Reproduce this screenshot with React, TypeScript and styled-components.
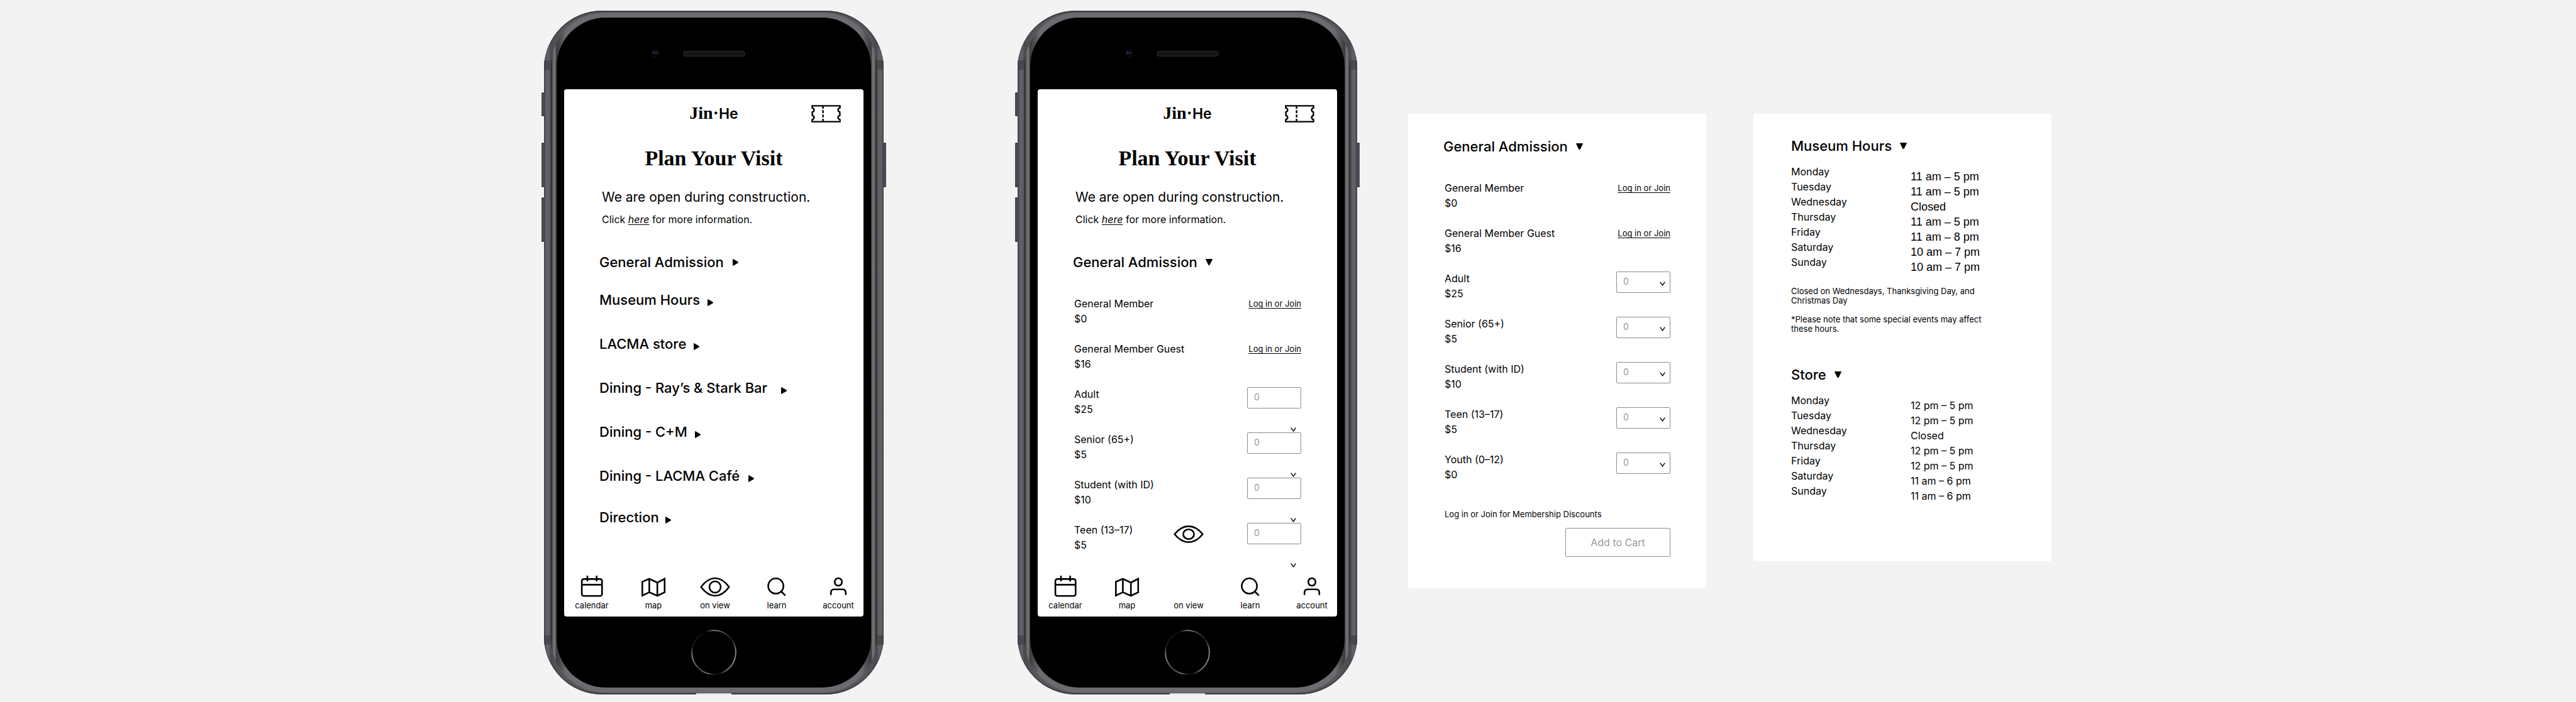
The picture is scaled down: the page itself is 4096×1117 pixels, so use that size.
import React from 'react';
import styled, { createGlobalStyle } from 'styled-components';

const sans = `Inter, "Liberation Sans", Arial, sans-serif`;
const grotesk = `"Liberation Sans", Arial, sans-serif`;
const serif = `"Liberation Serif", "Times New Roman", serif`;

const GlobalStyle = createGlobalStyle`
  *, *::before, *::after { box-sizing: border-box; }
  body {
    margin: 0;
    background: #f3f3f3;
    color: #000;
    font-family: ${sans};
    font-size: 16px;
    line-height: 24px;
  }
  h1, h2, p, ul { margin: 0; padding: 0; }
  ul { list-style: none; }
  a { color: inherit; }
  button, select { font: inherit; color: inherit; }
  button { border: 0; background: none; padding: 0; cursor: pointer; }
  svg { display: block; flex: none; }
`;

/* ---------- page ---------- */

const Stage = styled.main`
  display: flex;
  justify-content: center;
  align-items: flex-start;
  gap: 81px;
  min-height: 100vh;
  padding: 17px 0 0 31px;
`;

const Phones = styled.div`
  display: flex;
  gap: 213px;
`;

const Cards = styled.div`
  display: flex;
  align-items: flex-start;
  gap: 75px;
  padding-top: 164px;
`;

/* ---------- device ---------- */

const Body = styled.div`
  position: relative;
  width: 540px;
  padding: 3px 11px;
  border-radius: 92px;
  background: linear-gradient(to right, #3c3c40 0, #5e5e66 3px, #62626a 7px, #4a4a50 11px,
    #58585c 30px, #58585c calc(100% - 30px), #4a4a50 calc(100% - 11px), #62626a calc(100% - 7px),
    #5e5e66 calc(100% - 3px), #3c3c40 100%);
  box-shadow: inset 0 2px 1px #3c3c40, inset 0 -2px 1px #3c3c40;
`;

const Rim = styled.div`
  padding: 8px 9px;
  border-radius: 86px;
  background: linear-gradient(to right, #1a1a1a 0, #606062 3px, #7a7a7a 6px, #3a3a3a 9px,
    #6c6c70 24px, #6c6c70 calc(100% - 24px), #3a3a3a calc(100% - 9px), #7a7a7a calc(100% - 6px),
    #606062 calc(100% - 3px), #1a1a1a 100%);
`;

const Face = styled.div`
  padding: 0 12px;
  border-radius: 78px;
  background: #000;
`;

const SideKey = styled.span<{ $side: 'left' | 'right'; $top: number; $length: number }>`
  position: absolute;
  ${(p) => p.$side}: -4px;
  top: ${(p) => p.$top}px;
  width: 4px;
  height: ${(p) => p.$length}px;
  border-radius: 2px;
  background: #4b4b52;
  border-top: 2px solid #26262a;
  border-bottom: 2px solid #26262a;
`;

const Antenna = styled.span<{ $side: 'left' | 'right'; $edge: 'top' | 'bottom' }>`
  position: absolute;
  ${(p) => p.$side}: 0;
  ${(p) => p.$edge}: 79px;
  width: 10px;
  height: 15px;
  background: rgba(50, 50, 54, 0.5);
`;

const Port = styled.span`
  position: absolute;
  left: 50%;
  bottom: 0;
  width: 56px;
  height: 2px;
  margin-left: -28px;
  background: #d8d8d8;
`;

const Forehead = styled.div`
  display: grid;
  grid-template-columns: 1fr 99px 1fr;
  align-items: center;
  height: 114px;
`;

const Camera = styled.span`
  justify-self: end;
  width: 12px;
  height: 12px;
  margin-right: 38px;
  border-radius: 50%;
  border: 1px solid #141414;
  background: radial-gradient(circle at 32% 38%, #2a3f66 0 1px, transparent 2px),
    radial-gradient(circle at 70% 38%, #1c3058 0 1px, transparent 2px), #08090c;
`;

const Speaker = styled.span`
  height: 9px;
  border-radius: 5px;
  border: 1px solid #2b2b2b;
  background: #161616;
`;

const Screen = styled.div`
  display: flex;
  flex-direction: column;
  min-height: 839px;
  border-radius: 4px;
  background: #fff;
`;

const Chin = styled.div`
  display: flex;
  justify-content: center;
  align-items: center;
  height: 113px;
`;

const HomeButton = styled.button`
  width: 72px;
  height: 72px;
  padding: 2px;
  border-radius: 50%;
  background: conic-gradient(#777 0deg, #444 30deg, #1a1a1a 55deg, #777 80deg, #8a8a8a 110deg,
    #6a6a6a 145deg, #141414 165deg, #141414 180deg, #777 195deg, #4a4a4a 220deg, #8a8a8a 260deg,
    #1c1c1c 285deg, #0c0c0c 340deg, #777 360deg);

  &::after {
    content: '';
    display: block;
    height: 100%;
    border-radius: 50%;
    background: #000;
  }
`;

/* ---------- screen header ---------- */

const TopBar = styled.header`
  display: grid;
  grid-template-columns: 1fr auto 1fr;
  align-items: center;
  height: 54px;
  padding: 22px 36px 0;
`;

const Logo = styled.div`
  grid-column: 2;
  font: 700 28px/32px ${serif};
`;

const LogoSans = styled.span`
  font: 600 23px/32px ${sans};
`;

const TicketButton = styled.button`
  justify-self: end;
`;

const Title = styled.h1`
  margin-top: 36px;
  text-align: center;
  font: 700 34px/40px ${serif};
`;

const Intro = styled.div`
  margin: 28px 0 42px;
  padding-left: 60px;
`;

const Lead = styled.p`
  margin-bottom: 9px;
  font-size: 21px;
  line-height: 28px;
`;

const HereLink = styled.a`
  font-style: italic;
  text-underline-offset: 2px;
`;

/* ---------- menu ---------- */

const Menu = styled.ul`
  padding-left: 56px;
`;

const MenuItem = styled.li<{ $after: number }>`
  display: flex;
  margin-bottom: ${(p) => p.$after}px;
`;

const MenuButton = styled.button<{ $gap: number; $centered?: boolean }>`
  display: flex;
  align-items: ${(p) => (p.$centered ? 'center' : 'flex-end')};
  gap: ${(p) => p.$gap}px;
  font-size: 22px;
  font-weight: 500;
  line-height: 28px;

  svg { margin-bottom: ${(p) => (p.$centered ? 0 : 4)}px; }
`;

/* ---------- bottom navigation ---------- */

const NavBar = styled.nav`
  display: flex;
  justify-content: space-between;
  margin-top: auto;
  padding: 0 10px 10px 14px;
`;

const NavLink = styled.a`
  position: relative;
  display: flex;
  flex-direction: column;
  justify-content: flex-end;
  align-items: center;
  width: 60px;
  height: 55px;
  gap: 5px;
  font-size: 13px;
  line-height: 16px;
  white-space: nowrap;
  text-decoration: none;
`;

const FloatingIcon = styled.span`
  position: absolute;
  left: 6px;
  bottom: 105px;
`;

/* ---------- sections ---------- */

const Heading = styled.h2`
  font-size: 22px;
  font-weight: 500;
  line-height: 28px;
`;

const HeadingButton = styled.button`
  display: flex;
  align-items: center;
  gap: 13px;
`;

const Card = styled.section<{ $pad: string }>`
  width: 474px;
  padding: ${(p) => p.$pad};
  border-radius: 4px;
  background: #fff;
`;

const Admission = styled.div`
  padding: 0 57px 0 56px;
`;

const TicketList = styled.ul`
  display: flex;
  flex-direction: column;
  gap: 24px;
  margin-top: 40px;
  padding-left: 2px;
`;

const TicketRow = styled.li`
  display: flex;
  justify-content: space-between;
  align-items: flex-start;
`;

const TicketLabel = styled.label`
  display: block;
`;

const LoginLink = styled.a`
  font-size: 13px;
  text-underline-offset: 2px;
  text-decoration-skip-ink: none;
`;

const Quantity = styled.div`
  position: relative;
  margin-top: 1px;
`;

const QuantitySelect = styled.select`
  display: block;
  width: 86px;
  height: 34px;
  padding: 0 0 3px 10px;
  appearance: none;
  border: 1px solid #8c8c8c;
  border-radius: 2px;
  background: #fff;
  color: #999;
  font-size: 14px;
`;

const QuantityCaret = styled.span<{ $drop: number }>`
  position: absolute;
  right: 8px;
  top: ${(p) => p.$drop}px;
  pointer-events: none;
`;

const Discount = styled.p`
  margin-top: 43px;
  padding-left: 2px;
  font-size: 13px;
  line-height: 16px;
`;

const CartButton = styled.button`
  display: block;
  width: 167px;
  height: 46px;
  margin: 14px 0 0 auto;
  border: 1px solid #8c8c8c;
  border-radius: 2px;
  color: #999;
`;

const Hours = styled.table`
  margin-top: 19px;
  border-collapse: collapse;
  line-height: 16px;
`;

const Day = styled.th`
  width: 190px;
  padding: 0 0 8px;
  font-weight: 400;
  text-align: left;
`;

const Time = styled.td<{ $wide?: boolean }>`
  padding: 8px 0 0;
  font-family: ${(p) => (p.$wide ? grotesk : sans)};
  font-size: ${(p) => (p.$wide ? 18 : 16)}px;
`;

const Note = styled.p<{ $before: number }>`
  max-width: 320px;
  margin-top: ${(p) => p.$before}px;
  font-size: 13px;
  line-height: 15px;
`;

const StoreBlock = styled.div`
  margin-top: 51px;
`;

/* ---------- icons ---------- */

const RightArrow = () => (
  <svg width="9" height="11" viewBox="0 0 9 11" aria-hidden="true">
    <path d="M.5.5 8.5 5 8.5 6 .5 10.5Z" stroke="#000" strokeWidth="1" strokeLinejoin="round" />
  </svg>
);

const DownArrow = () => (
  <svg width="11" height="10" viewBox="0 0 11 10" aria-hidden="true">
    <path d="M.5.5H10.5L6.2 9.5H4.8Z" stroke="#000" strokeWidth="1" strokeLinejoin="round" />
  </svg>
);

const Caret = () => (
  <svg width="9" height="7" viewBox="0 0 9 7" fill="none" stroke="#000" strokeWidth="1.4" aria-hidden="true">
    <path d="M.7.6 4.5 5.9 8.3.6" />
  </svg>
);

const TicketIcon = () => (
  <svg width="47" height="28" viewBox="0 0 47 28" fill="none" stroke="#000" strokeWidth="2.4" aria-hidden="true">
    <path d="M1.4 1.4V4.6C5.4 5.8 5.4 10 1.6 11.4V16.6C5.4 18 5.4 22.2 1.4 23.4V26.6H45.6V23.4C41.6 22.2 41.6 18 45.4 16.6V11.4C41.6 10 41.6 5.8 45.6 4.6V1.4Z" />
    <path d="M18.6 1.4V26.6" strokeDasharray="4.6 2.3" />
  </svg>
);

const NavSvg = styled.svg.attrs({ width: 48, height: 34, viewBox: '0 0 48 34', 'aria-hidden': true })`
  fill: none;
  stroke: #000;
  stroke-width: 2.6;
`;

const CalendarIcon = () => (
  <NavSvg>
    <rect x="8.1" y="5.4" width="32.2" height="26.8" rx="3" />
    <path d="M8 14.4H40.4M17 0V9M31.6 0V9" />
  </NavSvg>
);

const MapIcon = () => (
  <NavSvg>
    <path d="M6.3 9.6 17.4 5 30.2 11 41.8 5V26.4L30.2 32 17.4 26.4 6.3 31.6ZM17.4 5V26.4M30.2 11V32" />
  </NavSvg>
);

const EyeIcon = () => (
  <NavSvg>
    <path d="M1.7 18C6.5 11.5 14 4 24 4S41.5 11.5 46.3 18C41.5 24.5 34 32 24 32S6.5 24.5 1.7 18Z" strokeLinejoin="round" />
    <circle cx="24" cy="18" r="9" />
  </NavSvg>
);

const FlatEyeIcon = () => (
  <NavSvg>
    <path d="M1.7 18C6.5 12 14 5.4 24 5.4S41.5 12 46.3 18C41.5 24 34 30.6 24 30.6S6.5 24 1.7 18Z" strokeLinejoin="round" />
    <ellipse cx="24" cy="18" rx="8.6" ry="7.8" />
  </NavSvg>
);

const SearchIcon = () => (
  <NavSvg>
    <circle cx="22.6" cy="16.4" r="12.1" />
    <path d="M31 25 37.8 31.6" />
  </NavSvg>
);

const PersonIcon = () => (
  <NavSvg>
    <ellipse cx="24" cy="10" rx="5.8" ry="6" />
    <path d="M12.2 30.8V27C12.2 23.6 14.4 21.8 17.2 21.8H30.8C33.6 21.8 35.8 23.6 35.8 27V30.8" />
  </NavSvg>
);

/* ---------- data ---------- */

const menu = [
  { label: 'General Admission', gap: 14, after: 32, centered: true },
  { label: 'Museum Hours', gap: 12, after: 42 },
  { label: 'LACMA store', gap: 12, after: 42 },
  { label: 'Dining - Ray’s & Stark Bar', gap: 22, after: 42 },
  { label: 'Dining - C+M', gap: 12, after: 42 },
  { label: 'Dining - LACMA Café', gap: 14, after: 38 },
  { label: 'Direction', gap: 10, after: 0 },
];

const tickets = [
  { label: 'General Member', price: '$0', members: true },
  { label: 'General Member Guest', price: '$16', members: true },
  { label: 'Adult', price: '$25' },
  { label: 'Senior (65+)', price: '$5' },
  { label: 'Student (with ID)', price: '$10' },
  { label: 'Teen (13–17)', price: '$5' },
  { label: 'Youth (0–12)', price: '$0' },
];

const museumHours = [
  ['Monday', '11 am – 5 pm'],
  ['Tuesday', '11 am – 5 pm'],
  ['Wednesday', 'Closed'],
  ['Thursday', '11 am – 5 pm'],
  ['Friday', '11 am – 8 pm'],
  ['Saturday', '10 am – 7 pm'],
  ['Sunday', '10 am – 7 pm'],
];

const storeHours = [
  ['Monday', '12 pm – 5 pm'],
  ['Tuesday', '12 pm – 5 pm'],
  ['Wednesday', 'Closed'],
  ['Thursday', '12 pm – 5 pm'],
  ['Friday', '12 pm – 5 pm'],
  ['Saturday', '11 am – 6 pm'],
  ['Sunday', '11 am – 6 pm'],
];

/* ---------- parts ---------- */

function OpenHeading({ children }: { children: React.ReactNode }) {
  return (
    <Heading>
      <HeadingButton type="button" aria-expanded="true">
        {children}
        <DownArrow />
      </HeadingButton>
    </Heading>
  );
}

function TicketRows({ id, count, caretDrop }: { id: string; count: number; caretDrop: number }) {
  return (
    <TicketList>
      {tickets.slice(0, count).map((t, i) => (
        <TicketRow key={t.label}>
          <div>
            {t.members ? <p>{t.label}</p> : <TicketLabel htmlFor={`${id}-${i}`}>{t.label}</TicketLabel>}
            <p>{t.price}</p>
          </div>
          {t.members ? (
            <LoginLink href="#login">Log in or Join</LoginLink>
          ) : (
            <Quantity>
              <QuantitySelect id={`${id}-${i}`} defaultValue="0">
                {['0', '1', '2', '3', '4'].map((n) => (
                  <option key={n}>{n}</option>
                ))}
              </QuantitySelect>
              <QuantityCaret $drop={caretDrop}>
                <Caret />
              </QuantityCaret>
            </Quantity>
          )}
        </TicketRow>
      ))}
    </TicketList>
  );
}

function HoursTable({ rows, wide }: { rows: string[][]; wide?: boolean }) {
  return (
    <Hours>
      <tbody>
        {rows.map(([day, time]) => (
          <tr key={day}>
            <Day scope="row">{day}</Day>
            <Time $wide={wide}>{time}</Time>
          </tr>
        ))}
      </tbody>
    </Hours>
  );
}

function Phone({ children, eyeRaised }: { children: React.ReactNode; eyeRaised?: boolean }) {
  return (
    <Body>
      <SideKey $side="left" $top={130} $length={38} />
      <SideKey $side="left" $top={210} $length={71} />
      <SideKey $side="left" $top={297} $length={71} />
      <SideKey $side="right" $top={210} $length={71} />
      <Rim>
        <Face>
          <Forehead>
            <Camera />
            <Speaker />
          </Forehead>
          <Screen>
            <TopBar>
              <Logo>
                Jin·<LogoSans>He</LogoSans>
              </Logo>
              <TicketButton type="button" aria-label="Tickets">
                <TicketIcon />
              </TicketButton>
            </TopBar>
            <Title>Plan Your Visit</Title>
            <Intro>
              <Lead>We are open during construction.</Lead>
              <p>
                Click <HereLink href="#construction">here</HereLink> for more information.
              </p>
            </Intro>
            {children}
            <NavBar>
              <NavLink href="#calendar"><CalendarIcon />calendar</NavLink>
              <NavLink href="#map"><MapIcon />map</NavLink>
              <NavLink href="#on-view">
                {eyeRaised ? <FloatingIcon><FlatEyeIcon /></FloatingIcon> : <EyeIcon />}
                on view
              </NavLink>
              <NavLink href="#learn"><SearchIcon />learn</NavLink>
              <NavLink href="#account"><PersonIcon />account</NavLink>
            </NavBar>
          </Screen>
          <Chin>
            <HomeButton type="button" aria-label="Home" />
          </Chin>
        </Face>
      </Rim>
      <Antenna $side="left" $edge="top" />
      <Antenna $side="right" $edge="top" />
      <Antenna $side="left" $edge="bottom" />
      <Antenna $side="right" $edge="bottom" />
      <Port />
    </Body>
  );
}

export default function App() {
  return (
    <>
      <GlobalStyle />
      <Stage>
        <Phones>
          <Phone>
            <Menu>
              {menu.map((m) => (
                <MenuItem key={m.label} $after={m.after}>
                  <MenuButton type="button" $gap={m.gap} $centered={m.centered}>
                    {m.label}
                    <RightArrow />
                  </MenuButton>
                </MenuItem>
              ))}
            </Menu>
          </Phone>
          <Phone eyeRaised>
            <Admission>
              <OpenHeading>General Admission</OpenHeading>
              <TicketRows id="phone" count={6} caretDrop={64} />
            </Admission>
          </Phone>
        </Phones>
        <Cards>
          <Card $pad="38px 0 50px">
            <Admission>
              <OpenHeading>General Admission</OpenHeading>
              <TicketRows id="card" count={7} caretDrop={16} />
              <Discount>Log in or Join for Membership Discounts</Discount>
              <CartButton type="button">Add to Cart</CartButton>
            </Admission>
          </Card>
          <Card $pad="37px 59px 96px 60px">
            <OpenHeading>Museum Hours</OpenHeading>
            <HoursTable rows={museumHours} wide />
            <Note $before={23}>Closed on Wednesdays, Thanksgiving Day, and Christmas Day</Note>
            <Note $before={15}>*Please note that some special events may affect these hours.</Note>
            <StoreBlock>
              <OpenHeading>Store</OpenHeading>
              <HoursTable rows={storeHours} />
            </StoreBlock>
          </Card>
        </Cards>
      </Stage>
    </>
  );
}
